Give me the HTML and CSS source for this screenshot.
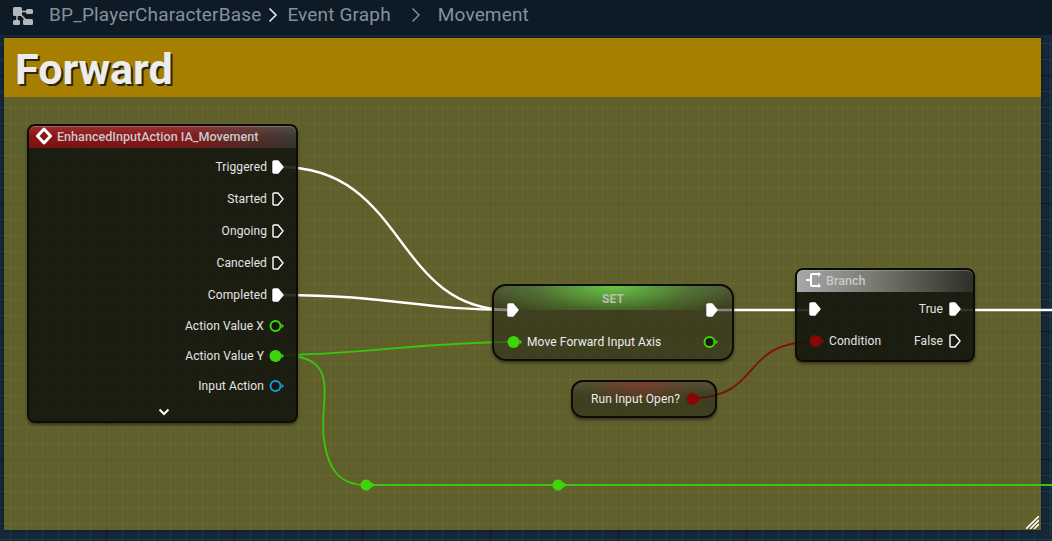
FILE: index.html
```html
<!DOCTYPE html>
<html lang="en">
<head>
    <meta charset="UTF-8">
    <meta name="viewport" content="width=device-width, initial-scale=1.0">
    <title>BP_PlayerCharacterBase</title>
    <link rel="stylesheet" href="styles.css">
</head>
<body>
    <svg class="defs" width="0" height="0">
        <symbol id="exec" viewBox="0 0 12 14">
            <path d="M2 1H6L11 7L6 13H2Q1 13 1 12V2Q1 1 2 1Z" fill="currentColor" stroke="currentColor" stroke-width="1.4" stroke-linejoin="round"/>
        </symbol>
        <symbol id="exec-open" viewBox="0 0 12 14">
            <path d="M2 1H6L11 7L6 13H2Q1 13 1 12V2Q1 1 2 1Z" fill="none" stroke="currentColor" stroke-width="1.4" stroke-linejoin="round"/>
        </symbol>
        <symbol id="data" viewBox="0 0 15 14">
            <circle cx="6.5" cy="7" r="6" fill="currentColor"/>
            <path d="M12.5 4.5L15 7L12.5 9.5Z" fill="currentColor"/>
        </symbol>
        <symbol id="data-open" viewBox="0 0 15 14">
            <circle cx="6.5" cy="7" r="5" fill="#14160f" stroke="currentColor" stroke-width="2"/>
            <path d="M12.5 4.5L15 7L12.5 9.5Z" fill="currentColor"/>
        </symbol>
    </svg>

    <header class="topbar">
        <svg class="graph-icon" width="22" height="20" viewBox="0 0 22 20">
            <rect x="1" y="2" width="9" height="9" rx="1.5" fill="#b5b8ba"/>
            <rect x="14" y="4" width="7" height="5" rx="1.5" fill="#b5b8ba"/>
            <rect x="1" y="15" width="7" height="5" rx="1.5" fill="#b5b8ba"/>
            <rect x="11" y="14" width="10" height="6" rx="1.5" fill="#b5b8ba"/>
            <path d="M9 6.500H15M5 10V16M8 9L14 15" stroke="#b5b8ba" stroke-width="1.500" fill="none"/>
        </svg>
        <span class="crumb">BP_PlayerCharacterBase</span>
        <svg class="chevron" width="10" height="16" viewBox="0 0 10 16"><path d="M1.5 1.5L8 8L1.5 14.5" fill="none" stroke="#e8e8e8" stroke-width="1.6"/></svg>
        <span class="crumb">Event Graph</span>
        <svg class="chevron chevron-wide" width="10" height="16" viewBox="0 0 10 16"><path d="M1.5 1.5L8 8L1.5 14.5" fill="none" stroke="#8b949b" stroke-width="1.4"/></svg>
        <span class="crumb">Movement</span>
    </header>

    <main class="canvas">
        <section class="comment">
            <h1 class="comment-title">Forward</h1>
            <div class="comment-body"></div>
        </section>

        <svg class="wires" width="1052" height="506" viewBox="0 35 1052 506">
            <g fill="none" stroke="#fff" stroke-width="2.4">
                <path d="M280 167C408 167 392 310 510 310"/>
                <path d="M280 295C390 295 420 310 510 310"/>
                <path d="M712 310H810"/>
                <path d="M955 310H1052"/>
            </g>
            <g fill="none" stroke="#3cc40c" stroke-width="1.8">
                <path d="M280 355C350 355 430 342 510 342"/>
                <path d="M280 355C345 355 318 400 324 440C328 470 340 485 366 485H1052"/>
            </g>
            <path d="M692 398C762 398 740 342 812 342" fill="none" stroke="#7e1010" stroke-width="1.8"/>
            <g fill="#3dd60a">
                <circle cx="366" cy="485" r="5.5"/>
                <path d="M371 482L375 485L371 488Z"/>
                <circle cx="558" cy="485" r="5.5"/>
                <path d="M563 482L567 485L563 488Z"/>
            </g>
        </svg>

        <div class="node event-node">
            <div class="node-title event-title">
                <svg width="16" height="18" viewBox="0 0 16 18"><path d="M8 2L14.500 9L8 16L1.500 9Z" fill="none" stroke="#fff" stroke-width="3" stroke-linejoin="round"/></svg>
                <span>EnhancedInputAction IA_Movement</span>
            </div>
            <div class="pins">
                <div class="pin-row exec-row">Triggered<svg class="pin-exec pin-white"><use href="#exec"/></svg></div>
                <div class="pin-row exec-row">Started<svg class="pin-exec pin-white"><use href="#exec-open"/></svg></div>
                <div class="pin-row exec-row">Ongoing<svg class="pin-exec pin-white"><use href="#exec-open"/></svg></div>
                <div class="pin-row exec-row">Canceled<svg class="pin-exec pin-white"><use href="#exec-open"/></svg></div>
                <div class="pin-row exec-row">Completed<svg class="pin-exec pin-white"><use href="#exec"/></svg></div>
                <div class="pin-row data-row">Action Value X<svg class="pin-data pin-green"><use href="#data-open"/></svg></div>
                <div class="pin-row data-row">Action Value Y<svg class="pin-data pin-green"><use href="#data"/></svg></div>
                <div class="pin-row data-row">Input Action<svg class="pin-data pin-blue"><use href="#data-open"/></svg></div>
            </div>
            <div class="expand">
                <svg width="12" height="8" viewBox="0 0 12 8"><path d="M1.5 1.5L6 6L10.500 1.5" fill="none" stroke="#fff" stroke-width="2"/></svg>
            </div>
        </div>

        <div class="node set-node">
            <div class="set-title">SET</div>
            <div class="set-row set-exec">
                <svg class="pin-exec pin-white"><use href="#exec"/></svg>
                <svg class="pin-exec pin-white"><use href="#exec"/></svg>
            </div>
            <div class="set-row set-data">
                <svg class="pin-data pin-green"><use href="#data"/></svg>
                <span class="set-label">Move Forward Input Axis</span>
                <svg class="pin-data pin-green"><use href="#data-open"/></svg>
            </div>
        </div>

        <div class="node get-node">
            <span>Run Input Open?</span>
            <svg class="pin-data pin-red"><use href="#data"/></svg>
        </div>

        <div class="node branch-node">
            <div class="node-title branch-title">
                <svg width="16" height="16" viewBox="0 0 16 16"><path d="M0 8H5M5 8V3Q5 2 6 2H13M5 8V13Q5 14 6 14H13" fill="none" stroke="#fff" stroke-width="2"/><path d="M12 0V5L15 2Z M12 11V16L15 14Z" fill="#fff"/></svg>
                <span>Branch</span>
            </div>
            <div class="branch-row">
                <svg class="pin-exec pin-white"><use href="#exec"/></svg>
                <span class="branch-out">True<svg class="pin-exec pin-white"><use href="#exec"/></svg></span>
            </div>
            <div class="branch-row">
                <span class="branch-in"><svg class="pin-data pin-red"><use href="#data"/></svg>Condition</span>
                <span class="branch-out">False<svg class="pin-exec pin-white"><use href="#exec-open"/></svg></span>
            </div>
        </div>

        <svg class="grip" width="13" height="13" viewBox="0 0 13 13">
            <path d="M0 13L13 0M4 13L13 4M8 13L13 8" stroke="#fff" stroke-width="1.6"/>
        </svg>
    </main>
</body>
</html>
```

FILE: styles.css
```css
* {
    box-sizing: border-box;
}
html, body {
    height: 100%;
}
body {
    margin: 0;
    overflow: hidden;
    display: flex;
    flex-direction: column;
    background-color: #14283a;
    color: #fff;
    font-family: Roboto, "Liberation Sans", sans-serif;
    font-size: 12px;
    letter-spacing: 0.1px;
    white-space: nowrap;
}
.defs {
    position: absolute;
}

/* breadcrumb */
.topbar {
    height: 35px;
    flex: none;
    display: flex;
    align-items: center;
    padding: 0 0 6px 12px;
    background-color: #0d1b27;
}
.graph-icon {
    margin-right: 15px;
}
.crumb {
    color: #87909a;
    font-size: 19px;
    letter-spacing: 0.16px;
}
.chevron {
    margin: 0 9px 0 7px;
}
.chevron-wide {
    margin: 0 17px 0 20px;
}

/* canvas */
.canvas {
    position: relative;
    flex: 1;
    background-color: #14283a;
    background-image:
        linear-gradient(90deg, rgba(0, 0, 0, 0.5) 1px, transparent 1px),
        linear-gradient(rgba(0, 0, 0, 0.5) 1px, transparent 1px),
        linear-gradient(90deg, rgba(255, 255, 255, 0.06) 1px, transparent 1px),
        linear-gradient(rgba(255, 255, 255, 0.06) 1px, transparent 1px);
    background-size: 128px 128px, 128px 128px, 16px 16px, 16px 16px;
    background-position: 106px 0, 0 40px, 10px 0, 0 8px;
}
.comment {
    display: flex;
    flex-direction: column;
    width: 1037px;
    height: 492px;
    margin: 3px 0 0 4px;
    box-shadow: 0 0 3px rgba(0, 0, 0, 0.4);
}
.comment-title {
    height: 59px;
    margin: 0;
    padding: 2px 0 0 11px;
    background-color: #a67e00;
    color: #ececec;
    font-size: 43px;
    font-weight: 700;
    letter-spacing: 0;
    line-height: 58px;
    text-shadow: 2px 2px 0 #2a2410;
}
.comment-body {
    flex: 1;
    background-color: rgba(172, 152, 30, 0.5);
}
.wires {
    position: absolute;
    left: 0;
    top: 0;
}
.grip {
    position: absolute;
    left: 1026px;
    top: 481px;
}

/* nodes, translucent so the wires show faintly under the pins */
.node {
    position: absolute;
    border: 2px solid #0b0b08;
    box-shadow: 0 2px 3px rgba(0, 0, 0, 0.45);
}
.node-title {
    display: flex;
    align-items: center;
    padding-bottom: 2px;
    font-size: 12.6px;
    font-weight: 500;
    letter-spacing: 0;
    color: #c9c9c9;
    box-shadow: inset 0 1px 0 rgba(255, 255, 255, 0.22);
}
.pin-exec {
    width: 12px;
    height: 14px;
    flex: none;
}
.pin-data {
    width: 15px;
    height: 14px;
    flex: none;
}
.pin-white { color: #fff; }
.pin-green { color: #3dd60a; }
.pin-blue { color: #0f9ad8; }
.pin-red { color: #8a0606; }

.event-node {
    left: 27px;
    top: 89px;
    width: 271px;
    height: 299px;
    border-radius: 8px;
    background-color: rgba(18, 20, 14, 0.87);
}
.event-title {
    height: 22px;
    padding-left: 7px;
    gap: 5px;
    border-radius: 6px 6px 0 0;
    background:
        linear-gradient(rgba(255, 255, 255, 0.1), transparent 45%, rgba(0, 0, 0, 0.15)),
        linear-gradient(90deg, #8f1416 0%, #8a1a1c 55%, #3c3a34 100%);
}
.pins {
    padding: 3px 12px 0 0;
}
.pin-row {
    display: flex;
    align-items: center;
    justify-content: flex-end;
    gap: 5px;
    color: #e4e4e4;
}
.exec-row {
    height: 32px;
}
.data-row {
    height: 30px;
}
.expand {
    display: flex;
    justify-content: center;
    padding: 7px 0 0 2px;
}

.set-node {
    left: 492px;
    top: 249px;
    width: 242px;
    height: 77px;
    border-radius: 14px;
    background:
        radial-gradient(ellipse 130px 40px at 50% 0, rgba(105, 210, 70, 0.9), rgba(90, 190, 60, 0.3) 60%, transparent) top / 100% 24px no-repeat,
        linear-gradient(rgba(255, 255, 255, 0.1), transparent 30%),
        rgba(34, 36, 22, 0.55);
}
.set-title {
    height: 16px;
    text-align: center;
    color: #bdbfb0;
    font-weight: 700;
    line-height: 26px;
}
.set-row {
    display: flex;
    align-items: center;
    justify-content: space-between;
    height: 16px;
    padding: 0 14px 0 13px;
}
.set-data {
    margin-top: 16px;
}
.set-label {
    flex: 1;
    padding-left: 5px;
    color: #ececec;
}

.get-node {
    left: 571px;
    top: 345px;
    width: 146px;
    height: 38px;
    display: flex;
    align-items: center;
    padding: 0 15px 0 18px;
    gap: 6px;
    border-radius: 12px;
    color: #ececec;
    background:
        radial-gradient(ellipse 60px 22px at 48% 0, rgba(150, 50, 40, 0.6), transparent) top / 100% 25px no-repeat,
        linear-gradient(rgba(255, 255, 255, 0.1), transparent 40%),
        rgba(34, 36, 22, 0.55);
}

.branch-node {
    left: 795px;
    top: 233px;
    width: 180px;
    height: 94px;
    border-radius: 8px;
    background-color: rgba(18, 20, 14, 0.87);
}
.branch-title {
    height: 22px;
    padding-left: 9px;
    gap: 4px;
    border-radius: 6px 6px 0 0;
    background: linear-gradient(90deg, #a8a8a8 0%, #77786f 45%, #2e2f28 100%);
}
.branch-row {
    display: flex;
    align-items: center;
    justify-content: space-between;
    height: 32px;
    padding: 0 12px;
    color: #e4e4e4;
}
.branch-title + .branch-row {
    margin-top: 1px;
}
.branch-out,
.branch-in {
    display: flex;
    align-items: center;
}
.branch-out {
    gap: 6px;
}
.branch-in {
    gap: 5px;
}
```
